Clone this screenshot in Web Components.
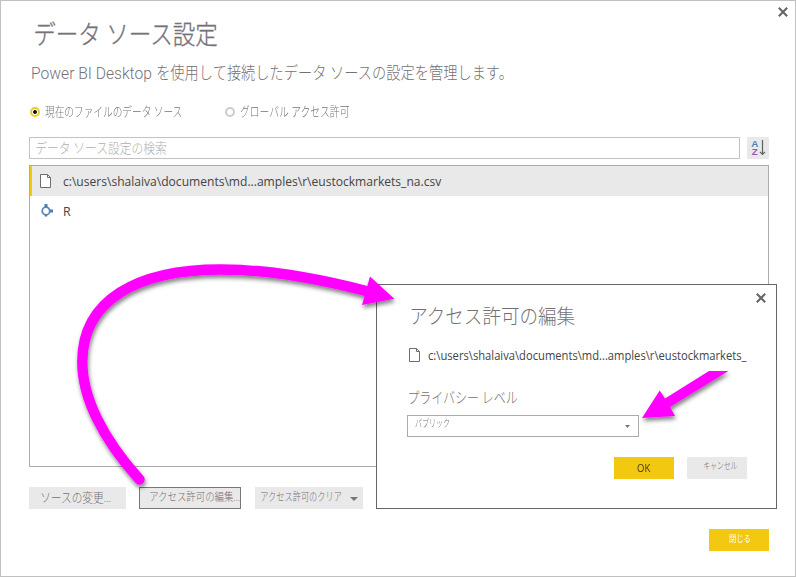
<!DOCTYPE html>
<html lang="ja">
<head>
<meta charset="utf-8">
<title>データ ソース設定</title>
<style>
html,body{margin:0;padding:0;background:#fff}
body{font-family:"Open Sans","Noto Sans CJK JP",sans-serif}
</style>
</head>
<body>
<data-source-settings></data-source-settings>
<script>
function define(name, html, setup) {
  customElements.define(name, class extends HTMLElement {
    constructor() {
      super();
      this.attachShadow({ mode: 'open' }).innerHTML = html;
    }
    connectedCallback() { if (setup) setup(this, this.shadowRoot); }
  });
}

/* One line of text whose ink is fitted to the width in "w"; "dy" nudges the baseline. */
define('fit-text', `
<style>
:host{display:block;flex:none;color:#757075;font-family:Roboto,"Noto Sans CJK JP",sans-serif;font-weight:300}
:host([ui]){color:#444;font-family:"Open Sans","Noto Sans",sans-serif;font-weight:400}
span{display:block;width:max-content;white-space:pre;transform-origin:0 50%}
</style><span></span>`, (host, root) => {
  const span = root.querySelector('span');
  const w = +host.getAttribute('w'), size = +host.getAttribute('size'), h = +host.getAttribute('h') || 22;
  const dy = host.hasAttribute('dy') ? +host.getAttribute('dy') : host.hasAttribute('ui') ? 1 : 0;
  span.textContent = host.getAttribute('text');
  host.style.cssText += `;width:${w}px;height:${h}px;line-height:${h}px;font-size:${size}px`;
  const cs = getComputedStyle(host);
  const ctx = document.createElement('canvas').getContext('2d');
  ctx.font = `${cs.fontWeight} ${size}px ${cs.fontFamily}`;
  const m = ctx.measureText(span.textContent);
  const s = w / (m.actualBoundingBoxRight + m.actualBoundingBoxLeft);
  span.style.transform = `translate(${m.actualBoundingBoxLeft * s}px,${dy}px) scaleX(${s})`;
});

define('close-icon', `
<style>:host{display:block;width:10px;height:10px}svg{display:block}</style>
<svg width="10" height="10"><path d="M.8.8 9.2 9.2M9.2.8.8 9.2" stroke="#666" stroke-width="2.1"/></svg>`);

define('file-icon', `
<style>:host{display:block;flex:none;width:11px;height:14px}svg{display:block}</style>
<svg width="11" height="14"><path d="M.5.5H7.5L10.5 3.5V13.5H.5Z" fill="#fff" stroke="#6e6e6e"/><path d="M7.5.5V3.5H10.5" fill="none" stroke="#6e6e6e"/></svg>`);

define('r-icon', `
<style>:host{display:block;flex:none;width:12px;height:15px}svg{display:block}</style>
<svg width="12" height="15"><circle cx="5" cy="7" r="3.8" fill="#fff" stroke="#5c8abb" stroke-width="1.8"/><path d="M3.5 0h3v3.5h-3zM8.5 5.5h3.5v3H8.5zM3.8 10.6h2.4v1.9H3.8z" fill="#4c7fb5"/></svg>`);

define('sort-button', `
<style>:host{display:block;width:22px;height:22px;background:#e9e9e9}svg{display:block}
text{font-family:"Liberation Sans",sans-serif;font-size:9.8px;font-weight:700}</style>
<svg width="22" height="22"><text x="4.3" y="9.8" fill="#4a84bd">A</text><text x="4.7" y="18" fill="#9a58b5">Z</text>
<path d="M15.5 3V17M13 14.8 15.5 17.3 18 14.8" fill="none" stroke="#606060" stroke-width="1.2"/></svg>`);

define('radio-option', `
<style>:host{display:flex;align-items:center;height:22px}
i{box-sizing:border-box;width:10px;height:10px;border-radius:50%;border:2px solid #cbcbcb;flex:none;background:#fff}
:host([checked]) i{border-color:#eccb28;background:radial-gradient(circle,#111 0 1.5px,#fff 2.3px)}
slot{display:block}</style><i></i><slot></slot>`);

define('push-button', `
<style>:host{box-sizing:border-box;display:flex;flex:none;height:22px;background:#e9e9e9;overflow:hidden}
:host([focused]){border:1px solid #777}
:host([primary]){background:#f2c811}
:host([primary]) ::slotted(fit-text){color:var(--label,#fff)}</style><slot></slot>`);

define('caret-down', `
<style>:host{display:block;flex:none}svg{display:block;width:100%;height:100%}</style>
<svg viewBox="0 0 8 4" preserveAspectRatio="none"><path d="M0 0H8L4 4Z" fill="#777"/></svg>`);

define('source-row', `
<style>:host{box-sizing:border-box;display:flex;align-items:center;height:30px;padding-left:10px;border-left:3px solid transparent}
:host([selected]){background:#e9e9e9;border-left-color:#f2c811;padding-left:8px;border-left-width:2px}
</style><slot></slot>`);

define('permission-dialog', `
<style>
:host{box-sizing:border-box;display:block;width:401px;height:225px;background:#fff;border:1px solid #666}
.bar{display:flex;justify-content:flex-end;padding:8px 10px 0 0;height:10px}
.body{padding:0 0 0 30px;display:flex;flex-direction:column}
.file{display:flex;align-items:center;height:22px;gap:8px;margin:13px 0 0 2px}
.select{box-sizing:border-box;width:232px;height:22px;border:1px solid #ababab;display:flex;margin-top:7px;justify-content:space-between}
.actions{display:flex;gap:13px;margin:20px 0 0 207px}
</style>
<div class="bar"><close-icon></close-icon></div>
<div class="body">
<fit-text style="margin:0 0 0 4px" text="アクセス許可の編集" w="165" size="20" h="28"></fit-text>
<div class="file" ><file-icon></file-icon><fit-text ui text="c:\\users\\shalaiva\\documents\\md...amples\\r\\eustockmarkets_" w="319" size="12.4"></fit-text></div>
<fit-text style="margin:20px 0 0 2px" text="プライバシー レベル" w="109" size="15" dy="1"></fit-text>
<div class="select"><fit-text style="margin-left:7px" text="パブリック" w="34" size="10.5" h="15"></fit-text><caret-down style="width:5px;height:3px;margin:9px 8px 0 0"></caret-down></div>
<div class="actions"><push-button primary style="width:60px;--label:#3c3a20"><fit-text ui style="margin-left:23px" text="OK" w="14" size="11.5" dy="0"></fit-text></push-button>
<push-button style="width:60px"><fit-text style="margin-left:17px" text="キャンセル" w="33" size="9.5" h="18"></fit-text></push-button></div>
</div>`);

define('callout-arrows', `
<style>:host{display:block;width:796px;height:577px;pointer-events:none}svg{display:block}</style>
<svg width="796" height="577">
<defs><filter id="sh" x="-10%" y="-10%" width="125%" height="130%"><feDropShadow dx="1" dy="3" stdDeviation="2" flood-color="#000" flood-opacity=".5"/></filter>
<clipPath id="cut"><path d="M600 371H760V450H600Z"/></clipPath></defs>
<g filter="url(#sh)" fill="#f0f"><path d="M139.5 479.5C102 438 82.3 397 82.3 362C82.3 300 137 269.5 221 269.5C270 269.5 320 279 368 291.5" fill="none" stroke="#f0f" stroke-width="10.4" stroke-linecap="round"/><path d="M370 276.5 394.3 298.7 362 305Z"/></g>
<g clip-path="url(#cut)"><path filter="url(#sh)" fill="#f0f" d="M642 418 659.7 390.5 665 398.5 709 371 728.5 371 670 407 675 416Z"/></g>
</svg>`);

define('data-source-settings', `
<style>
:host{box-sizing:border-box;display:block;position:relative;width:796px;height:577px;background:#fff;border:1px solid #c0c0c0;overflow:hidden}
.bar{display:flex;justify-content:flex-end;height:10px;padding:6px 7px 0 0}
.body{padding:0 26px 0 28px;display:flex;flex-direction:column}
.intro{display:flex;gap:5px;margin:9px 0 0 3px}
.radios{display:flex;margin-top:15px;padding-left:1px}
.search{display:flex;gap:7px;margin-top:14px}
.input{box-sizing:border-box;width:711px;height:22px;border:1px solid #c3c3c3}
.list{box-sizing:border-box;height:302px;border:1px solid #ababab;margin-top:6px}
.buttons{display:flex;margin-top:20px}
.end{display:flex;justify-content:flex-end;margin-top:20px}
permission-dialog{position:absolute;left:375px;top:283px}
callout-arrows{position:absolute;left:-1px;top:-1px}
</style>
<div class="bar"><close-icon></close-icon></div>
<div class="body">
<fit-text style="margin-left:6px;-webkit-text-stroke:.35px #7d787d" text="データ ソース設定" w="183" size="26" h="36"></fit-text>
<div class="intro"><fit-text text="Power BI Desktop" w="120" size="16" h="24"></fit-text><fit-text text="を使用して接続したデータ ソースの設定を管理します。" w="348" size="16.5" h="24"></fit-text></div>
<div class="radios"><radio-option checked><fit-text style="margin-left:5px" text="現在のファイルのデータ ソース" w="137" size="13"></fit-text></radio-option>
<radio-option style="margin-left:43px"><fit-text style="margin-left:5px" text="グローバル アクセス許可" w="110" size="13"></fit-text></radio-option></div>
<div class="search"><div class="input"><fit-text style="margin-left:6px;color:#b0aeb0" text="データ ソース設定の検索" w="131" size="13.5" h="20"></fit-text></div><sort-button></sort-button></div>
<div class="list">
<source-row selected><file-icon></file-icon><fit-text ui style="margin-left:12px" text="c:\\users\\shalaiva\\documents\\md...amples\\r\\eustockmarkets_na.csv" w="379" size="12.4"></fit-text></source-row>
<source-row style="padding-left:8px"><r-icon></r-icon><fit-text ui style="margin-left:11px" text="R" w="7" size="12.4"></fit-text></source-row>
</div>
<div class="buttons">
<push-button style="width:97px"><fit-text style="margin-left:12px" text="ソースの変更..." w="70" size="13" h="21"></fit-text></push-button>
<push-button focused style="width:102px;margin-left:13px"><fit-text style="margin-left:10px" text="アクセス許可の編集..." w="90" size="11.5" h="18"></fit-text></push-button>
<push-button style="width:108px;margin-left:14px"><fit-text style="margin-left:6px" text="アクセス許可のクリア" w="81" size="11.5" h="20"></fit-text><caret-down style="width:8px;height:4px;margin:10px 0 0 8px"></caret-down></push-button>
</div>
<div class="end"><push-button primary style="width:60px"><fit-text style="margin-left:20px;font-weight:400" text="閉じる" w="21" size="9" h="20" dy="0"></fit-text></push-button></div>
</div>
<permission-dialog></permission-dialog>
<callout-arrows></callout-arrows>`);
</script>
</body>
</html>
